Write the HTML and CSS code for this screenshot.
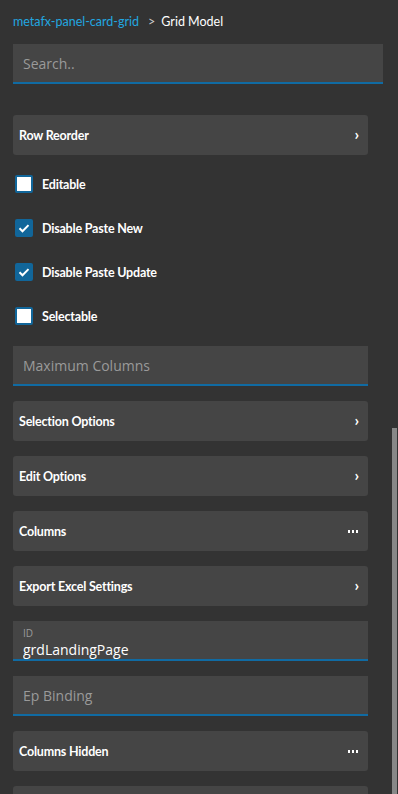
FILE: index.html
```html
<!DOCTYPE html>
<html lang="en">
<head>
    <meta charset="UTF-8">
    <title>Grid Model</title>
    <link rel="stylesheet" href="styles.css">
</head>
<body>
<div class="panel">
    <div class="crumbs">
        <a href="javascript:;" class="crumb-link">metafx-panel-card-grid</a>
        <span class="crumb-sep">&gt;</span>
        <span class="crumb-current">Grid Model</span>
    </div>
    <div class="search">
        <input type="text" placeholder="Search..">
    </div>
    <div class="props">
        <div class="card"><span>Row Reorder</span><i class="chev">&rsaquo;</i></div>

        <label class="check"><span class="box"></span>Editable</label>
        <label class="check"><span class="box on"><svg viewBox="0 0 18 18" width="18" height="18"><path d="M4.5 9.3l3 3 6-6.2" fill="none" stroke="#fff" stroke-width="2"/></svg></span>Disable Paste New</label>
        <label class="check"><span class="box on"><svg viewBox="0 0 18 18" width="18" height="18"><path d="M4.5 9.3l3 3 6-6.2" fill="none" stroke="#fff" stroke-width="2"/></svg></span>Disable Paste Update</label>
        <label class="check"><span class="box"></span>Selectable</label>

        <div class="field"><input type="text" placeholder="Maximum Columns"></div>
        <div class="card"><span>Selection Options</span><i class="chev">&rsaquo;</i></div>
        <div class="card"><span>Edit Options</span><i class="chev">&rsaquo;</i></div>
        <div class="card"><span>Columns</span><svg class="dots" viewBox="0 0 10 3" width="10" height="3"><rect x="0" y="0" width="2" height="3" fill="#fff"/><rect x="4" y="0" width="2" height="3" fill="#fff"/><rect x="8" y="0" width="2" height="3" fill="#fff"/></svg></div>
        <div class="card"><span>Export Excel Settings</span><i class="chev">&rsaquo;</i></div>
        <div class="field filled">
            <span class="field-label">ID</span>
            <input type="text" value="grdLandingPage">
        </div>
        <div class="field"><input type="text" placeholder="Ep Binding"></div>
        <div class="card"><span>Columns Hidden</span><svg class="dots" viewBox="0 0 10 3" width="10" height="3"><rect x="0" y="0" width="2" height="3" fill="#fff"/><rect x="4" y="0" width="2" height="3" fill="#fff"/><rect x="8" y="0" width="2" height="3" fill="#fff"/></svg></div>
        <div class="card"></div>
    </div>
    <div class="scroll-thumb"></div>
</div>
</body>
</html>
```

FILE: styles.css
```css
* {
    margin: 0;
    padding: 0;
    box-sizing: border-box;
    text-decoration: none;
}
html, body {
    height: 100%;
    overflow: hidden;
}
body {
    background: #333;
    color: #fff;
    font-family: Lato, "Liberation Sans", sans-serif;
}
.panel {
    position: relative;
    height: 794px;
    padding: 0 15px 0 13px;
}
.crumbs {
    display: flex;
    align-items: center;
    height: 44px;
    font-size: 12.5px;
    padding-bottom: 2px;
}
.crumb-link {
    color: #22a7e0;
}
.crumb-sep {
    margin: 0 6px 0 9px;
    color: #ccc;
}
.crumb-current {
    color: #fff;
}
.search input,
.field input {
    display: block;
    width: 100%;
    height: 40px;
    padding: 0 10px;
    border: 0;
    border-bottom: 2px solid #106ba3;
    background: #454545;
    color: #fff;
    font-family: "Open Sans", sans-serif;
    font-size: 14px;
    outline: none;
}
.search input::placeholder,
.field input::placeholder {
    color: #9a9a9a;
}
.props {
    padding-top: 31px;
    padding-right: 15px;
}
.card {
    display: flex;
    align-items: center;
    justify-content: space-between;
    height: 40px;
    margin-bottom: 15px;
    padding: 0 9px 0 6px;
    border-radius: 3px;
    background: #454545;
    font-size: 12.5px;
    font-weight: bold;
    letter-spacing: -0.2px;
}
.chev {
    font-style: normal;
    font-size: 16px;
    font-weight: bold;
    line-height: 1;
    margin-top: -2px;
}
.dots {
    display: block;
    margin-right: 1px;
}
.check {
    display: flex;
    align-items: center;
    height: 28px;
    margin-bottom: 16px;
    padding-left: 2px;
    font-size: 12.5px;
    font-weight: bold;
    letter-spacing: -0.2px;
}
.box {
    display: block;
    width: 18px;
    height: 18px;
    margin-right: 9px;
    border: 2px solid #11669a;
    border-radius: 2px;
    background: #fff;
}
.box.on {
    border: 0;
    background: #11669a;
}
.box svg {
    display: block;
}
.field {
    margin-bottom: 15px;
}
.field.filled {
    background: #454545;
    border-bottom: 2px solid #106ba3;
    padding-top: 6px;
    height: 40px;
}
.field.filled input {
    height: 20px;
    border: 0;
    background: transparent;
    font-size: 14px;
    color: #fff;
}
.field-label {
    display: block;
    padding-left: 10px;
    font-family: "Open Sans", sans-serif;
    font-size: 10px;
    line-height: 12px;
    color: #9a9a9a;
}
.scroll-thumb {
    position: absolute;
    right: 1px;
    top: 428px;
    bottom: 0;
    width: 5px;
    background: #888;
}
```
